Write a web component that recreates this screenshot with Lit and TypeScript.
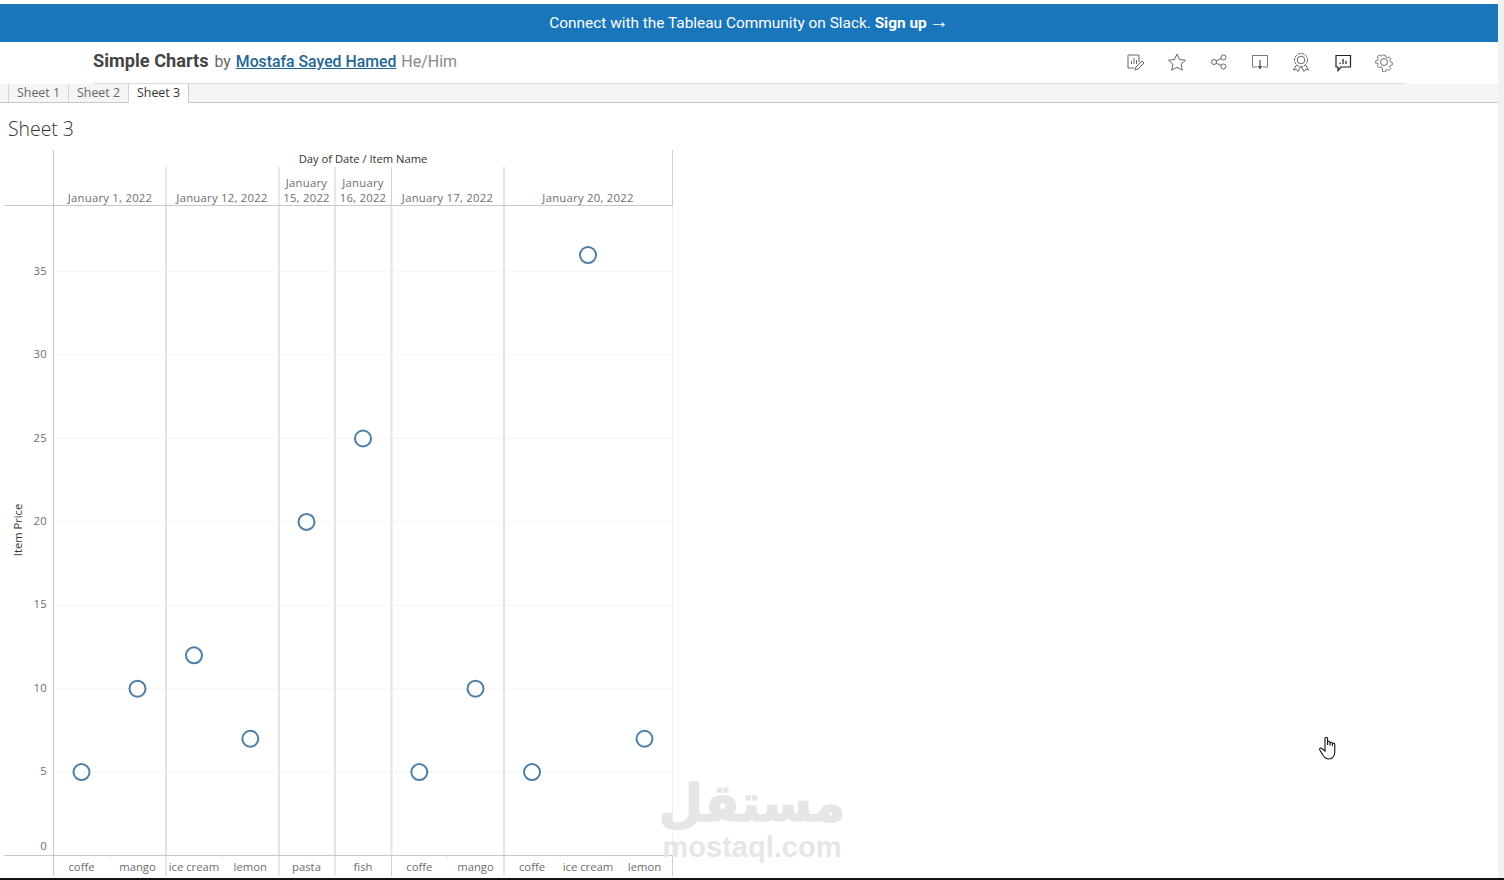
import { LitElement, html, css, svg } from "lit";
import { customElement } from "lit/decorators.js";

const dividers = [166, 279, 335, 391.5, 504];
const ticks = [35, 30, 25, 20, 15, 10, 5, 0];
const yOf = (v: number) => 855.5 - v * 16.68;
const dates = [
  { lines: ["January 1, 2022"], x: 110 },
  { lines: ["January 12, 2022"], x: 222 },
  { lines: ["January", "15, 2022"], x: 306.5 },
  { lines: ["January", "16, 2022"], x: 363 },
  { lines: ["January 17, 2022"], x: 447.5 },
  { lines: ["January 20, 2022"], x: 588 },
];
const items = [
  { n: "coffe", x: 81.5, v: 5 },
  { n: "mango", x: 137.5, v: 10 },
  { n: "ice cream", x: 194, v: 12 },
  { n: "lemon", x: 250.3, v: 7 },
  { n: "pasta", x: 306.5, v: 20 },
  { n: "fish", x: 363, v: 25 },
  { n: "coffe", x: 419.3, v: 5 },
  { n: "mango", x: 475.5, v: 10 },
  { n: "coffe", x: 532, v: 5 },
  { n: "ice cream", x: 588, v: 36 },
  { n: "lemon", x: 644.5, v: 7 },
];
const minorTicks = [110, 222, 447.5, 560, 616];

const icons = [
  svg`<path d="M14 10V3H3v13h6M6.500 12v-3M9 12V6M11.500 12V8" fill="none" stroke="#666"/><path d="M10 18l1-3 6-6 2 2-6 6z" fill="none" stroke="#666"/>`,
  svg`<path d="M10 2l2.500 5.500 6 .7-4.400 4 1.200 6L10 15.200 4.700 18.200l1.200-6-4.400-4 6-.7z" fill="none" stroke="#666"/>`,
  svg`<circle cx="6" cy="10" r="2.500" fill="none" stroke="#666"/><circle cx="15.500" cy="5.500" r="2.500" fill="none" stroke="#666"/><circle cx="15.500" cy="14.500" r="2.500" fill="none" stroke="#666"/><path d="M8.200 8.900l5-2.400M8.200 11.100l5 2.400" stroke="#666"/>`,
  svg`<path d="M7 15H2.500V3.500h15V15H13" fill="none" stroke="#777"/><path d="M10 8v6" stroke="#555" stroke-width="1.200"/><path d="M7.500 14h5L10 17.500z" fill="#555"/>`,
  svg`<circle cx="10" cy="8" r="6.500" fill="none" stroke="#666" stroke-dasharray="3 .8"/><circle cx="10" cy="8" r="3.800" fill="none" stroke="#666"/><path d="M5.500 13l-3 5 3-.5 1.500 2 2.500-4.500M14.500 13l3 5-3-.5-1.500 2-2.500-4.500" fill="none" stroke="#666"/>`,
  svg`<path d="M3 3.500h14.500V15H8l-3 3.500V15H3z" fill="none" stroke="#222" stroke-width="1.200"/><path d="M7 12v-1.500M10 12V7M13 12V9" stroke="#222" stroke-width="1.200"/>`,
  svg`<circle cx="10" cy="10" r="3.500" fill="none" stroke="#666"/><path d="M8.500 2h3l.5 2.300 1.700.8 2.100-1.100 2 2.200-1.200 2 .7 1.700 2.200.6v3l-2.200.5-.7 1.700 1.200 2-2.100 2.100-2-1.200-1.700.7-.5 2.200h-3L8 16.300l-1.700-.7-2 1.200-2.100-2.100 1.200-2-.7-1.700L.5 11.500v-3L2.700 8l.7-1.700-1.200-2 2.100-2.200 2 1.100L8 2.300z" transform="translate(1.300 1.300) scale(.87)" fill="none" stroke="#666"/>`,
];

@customElement("app-root")
export class AppRoot extends LitElement {
  static styles = css`
    :host {
      display: flex;
      height: 880px;
      width: 1504px;
      overflow: hidden;
      position: relative;
      background: #fff;
      font-family: "Roboto", "Liberation Sans", sans-serif;
      color: #333;
    }
    .main {
      width: 1498px;
      display: flex;
      flex-direction: column;
      padding-top: 4px;
      box-sizing: border-box;
    }
    .gutter {
      width: 6px;
      background: #f1f1f1;
    }
    .banner {
      height: 38px;
      background: #1a76ba;
      color: #fff;
      font-size: 15.4px;
      display: flex;
      align-items: center;
      justify-content: center;
      flex: none;
      white-space: pre;
    }
    .banner b {
      font-weight: 700;
    }
    .banner .arrow {
      font-size: 20px;
      line-height: 20px;
      font-weight: 500;
      margin-left: 2px;
      padding-bottom: 4px;
    }
    .titlebar {
      height: 42px;
      margin-left: 93px;
      width: 1312px;
      border-bottom: 1px solid #dcdcdc;
      display: flex;
      align-items: center;
      justify-content: space-between;
      flex: none;
      box-sizing: border-box;
      padding-bottom: 1px;
    }
    .title {
      display: flex;
      align-items: baseline;
      font-size: 15.8px;
      color: #666;
      padding-bottom: 3px;
    }
    .title strong {
      font-size: 18.2px;
      font-weight: 700;
      color: #444;
      margin-right: 6px;
    }
    .title a {
      color: #1f6595;
      font-weight: 500;
      text-decoration: underline;
      margin: 0 5px 0 5px;
    }
    .title .pron {
      color: #8a8a8a;
      font-size: 16px;
    }
    .icons {
      display: flex;
      gap: 21.5px;
      padding-right: 11px;
    }
    .icons svg {
      width: 20px;
      height: 20px;
      display: block;
    }
    .tabs {
      height: 19px;
      flex: none;
      box-sizing: border-box;
      background: #f5f5f5;
      border-bottom: 1px solid #c8c8c8;
      display: flex;
      padding-left: 8px;
      font-family: "Open Sans", sans-serif;
      font-size: 12.4px;
    }
    .tab {
      border-left: 1px solid #d4d4d4;
      width: 60px;
      box-sizing: border-box;
      justify-content: center;
      display: flex;
      align-items: center;
      color: #666;
      height: 18px;
      padding-bottom: 2px;
      white-space: nowrap;
    }
    .tab.active {
      background: #fff;
      color: #333;
      height: 19px;
      width: 61px;
      border-right: 1px solid #c8c8c8;
      padding-bottom: 3px;
    }
    .sheet-title {
      font-family: "Open Sans", sans-serif;
      font-size: 19.4px;
      font-weight: 300;
      color: #333;
      margin: 14px 0 0 8px;
      line-height: 24px;
      flex: none;
    }
    .chart {
      display: block;
      margin-top: 9px;
      flex: none;
    }
    .chart text {
      font-family: "Open Sans", sans-serif;
      font-size: 11.3px;
      fill: #6e6e6e;
    }
    .chart text.date {
      letter-spacing: 0.25px;
    }
    .chart text.head {
      fill: #333;
      font-size: 11.2px;
      font-weight: 500;
    }
    .foot {
      position: absolute;
      left: 0;
      right: 0;
      bottom: 0;
      height: 2px;
      background: #111;
    }
    .mark {
      position: absolute;
      left: 652px;
      top: 776px;
      width: 200px;
      text-align: center;
      color: #e6e6e6;
      font-weight: 700;
      pointer-events: none;
    }
    .mark .ar {
      font-family: "DejaVu Sans", sans-serif;
      font-size: 51px;
      line-height: 56px;
      display: block;
      -webkit-text-stroke: 1.5px #e6e6e6;
    }
    .mark .en {
      font-family: "Liberation Sans", sans-serif;
      font-size: 29px;
      line-height: 30px;
      display: block;
    }
    .cursor {
      position: absolute;
      left: 1317px;
      top: 735px;
      width: 24px;
      height: 26px;
    }
  `;

  render() {
    return html`
      <div class="main">
        <div class="banner">Connect with the Tableau Community on Slack. <b>Sign up</b><span class="arrow">→</span></div>
        <div class="titlebar">
          <div class="title">
            <strong>Simple Charts</strong> by <a>Mostafa Sayed Hamed</a>
            <span class="pron">He/Him</span>
          </div>
          <div class="icons">
            ${icons.map((i) => html`<svg viewBox="0 0 20 20">${i}</svg>`)}
          </div>
        </div>
        <div class="tabs">
          <div class="tab">Sheet 1</div>
          <div class="tab">Sheet 2</div>
          <div class="tab active">Sheet 3</div>
        </div>
        <div class="sheet-title">Sheet 3</div>
        ${this.chart()}
      </div>
      <div class="gutter"></div>
      <div class="foot"></div>
      <div class="mark">
        <span class="ar" dir="rtl">مستقل</span>
        <span class="en">mostaql.com</span>
      </div>
      <svg class="cursor" viewBox="0 0 24 26">
        <path
          d="M8 11V3.500a1.300 1.300 0 0 1 2.600 0V10l0-2.500a1.200 1.200 0 0 1 2.400 0V10.500V8.500a1.200 1.200 0 0 1 2.400 0V11V9.500a1.200 1.200 0 0 1 2.400 0V17c0 4-2.500 7-6 7-3 0-4.500-1.500-6-4l-3-5c-.8-1.500 1-2.500 2-1.500L8 16z"
          fill="#fff"
          stroke="#111"
          stroke-width="1.100"
        />
      </svg>
    `;
  }

  chart() {
    return html`<svg class="chart" width="680" height="730" viewBox="0 150 680 730">
      ${ticks.filter((t) => t > 0).map((t) => svg`<line x1="54" x2="672" y1=${yOf(t)} y2=${yOf(t)} stroke="#f5f5f5"/>`)}
      ${dividers.map((x) => svg`
        <line x1=${x} x2=${x} y1="206" y2="855" stroke="#e4e4e4" stroke-width="2"/>
        <line x1=${x} x2=${x} y1="167" y2="205" stroke="#cfcfcf"/>
        <line x1=${x} x2=${x} y1="856" y2="876" stroke="#cfcfcf"/>`)}
      ${minorTicks.map((x) => svg`<line x1=${x} x2=${x} y1="856" y2="859" stroke="#efefef"/>`)}
      <line x1="672.500" x2="672.500" y1="206" y2="855" stroke="#efefef"/>
      <line x1="672.500" x2="672.500" y1="150" y2="205" stroke="#cfcfcf"/>
      <line x1="672.500" x2="672.500" y1="856" y2="876" stroke="#cfcfcf"/>
      <line x1="53.500" x2="53.500" y1="150" y2="876" stroke="#c8c8c8"/>
      <line x1="4" x2="673" y1="205.500" y2="205.500" stroke="#c8c8c8"/>
      <line x1="4" x2="673" y1="855.500" y2="855.500" stroke="#c8c8c8"/>
      <text class="head" x="363" y="163" text-anchor="middle">Day of Date / Item Name</text>
      ${dates.map((d) =>
        d.lines.length === 2
          ? svg`<text class="date" x=${d.x} y="187" text-anchor="middle">${d.lines[0]}</text><text class="date" x=${d.x} y="202" text-anchor="middle">${d.lines[1]}</text>`
          : svg`<text class="date" x=${d.x} y="202" text-anchor="middle">${d.lines[0]}</text>`
      )}
      ${ticks.map((t) => svg`<text class="date" x="47" y=${t === 0 ? 850 : yOf(t) + 3} text-anchor="end">${t}</text>`)}
      <text class="head" transform="translate(22 530) rotate(-90)" text-anchor="middle">Item Price</text>
      ${items.map((i) => svg`
        <text x=${i.x} y="871" text-anchor="middle">${i.n}</text>
        <circle cx=${i.x} cy=${yOf(i.v)} r="8" fill="#fff" fill-opacity=".4" stroke="#4e7ea6" stroke-width="2"/>`)}
    </svg>`;
  }
}
